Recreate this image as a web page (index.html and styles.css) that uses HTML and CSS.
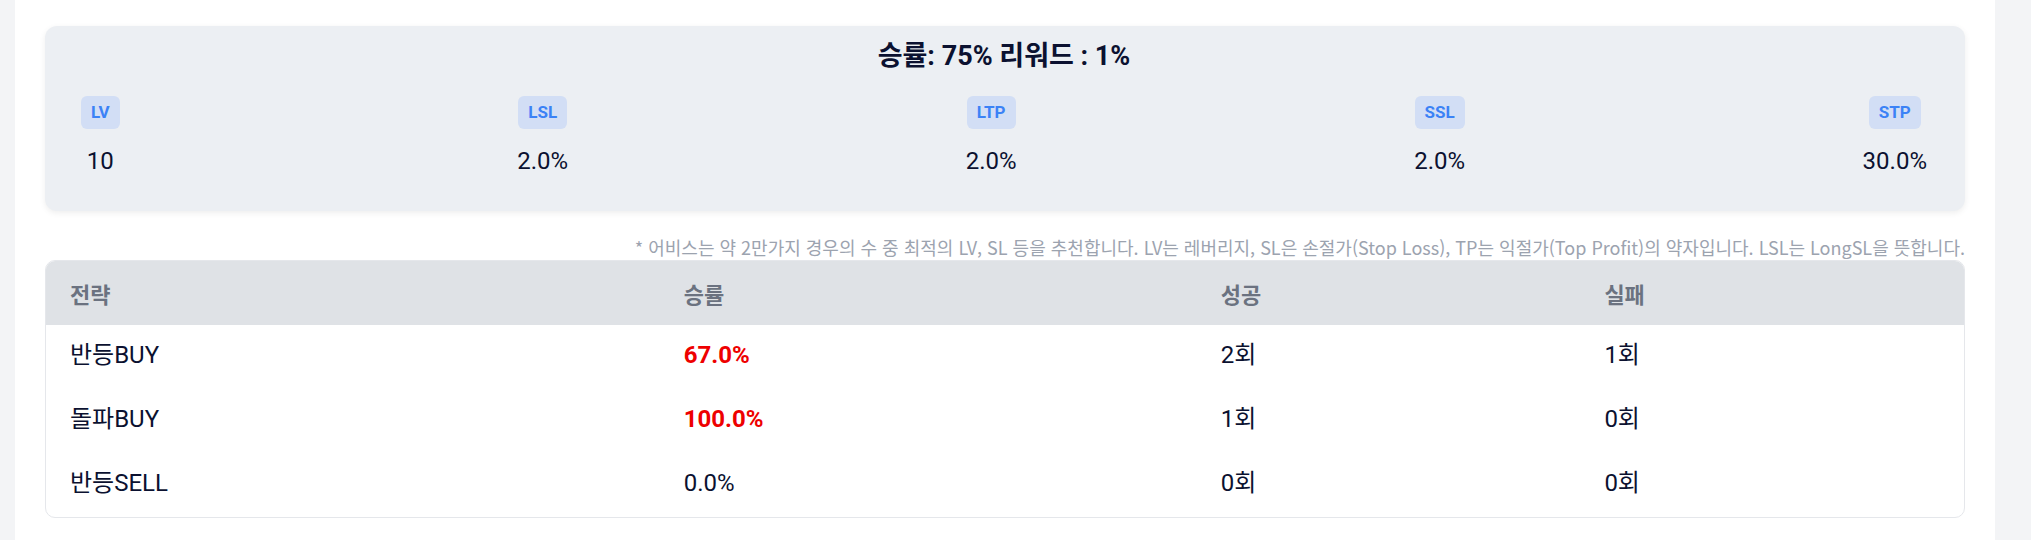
FILE: index.html
```html
<!DOCTYPE html>
<html lang="ko">
<head>
    <meta charset="UTF-8">
    <title>전략 추천 결과</title>
    <link rel="stylesheet" href="styles.css">
</head>
<body>
    <div class="panel">
        <div class="summary">
            <h2 class="summary-title">승률: 75% 리워드 : 1%</h2>
            <div class="stats">
                <div class="stat"><span class="badge">LV</span><span class="stat-value">10</span></div>
                <div class="stat"><span class="badge">LSL</span><span class="stat-value">2.0%</span></div>
                <div class="stat"><span class="badge">LTP</span><span class="stat-value">2.0%</span></div>
                <div class="stat"><span class="badge">SSL</span><span class="stat-value">2.0%</span></div>
                <div class="stat"><span class="badge">STP</span><span class="stat-value">30.0%</span></div>
            </div>
        </div>

        <p class="note">* 어비스는 약 2만가지 경우의 수 중 최적의 LV, SL 등을 추천합니다. LV는 레버리지, SL은 손절가(Stop Loss), TP는 익절가(Top Profit)의 약자입니다. LSL는 LongSL을 뜻합니다.</p>

        <div class="table-wrap">
            <table class="result-table">
                <colgroup>
                    <col class="col-name">
                    <col class="col-rate">
                    <col class="col-count">
                    <col class="col-count">
                </colgroup>
                <thead>
                    <tr><th>전략</th><th>승률</th><th>성공</th><th>실패</th></tr>
                </thead>
                <tbody>
                    <tr><td>반등BUY</td><td class="hot">67.0%</td><td>2회</td><td>1회</td></tr>
                    <tr><td>돌파BUY</td><td class="hot">100.0%</td><td>1회</td><td>0회</td></tr>
                    <tr><td>반등SELL</td><td>0.0%</td><td>0회</td><td>0회</td></tr>
                </tbody>
            </table>
        </div>
    </div>
</body>
</html>
```

FILE: styles.css
```css
body { margin: 0; background: #f3f4f6; font-family: Roboto, "Noto Sans CJK KR", sans-serif; color: #0b1130; }
.panel { margin-left: 15px; width: 1920px; min-height: 540px; padding: 26px 30px 0; background: #fff; }

.summary { background: #eceff3; border-radius: 12px; padding: 12px 38px 34px 36px; box-shadow: 0 2px 6px rgba(0, 0, 0, 0.07); }
.summary-title { margin: 0 0 22px; text-align: center; font-size: 27px; line-height: 36px; font-weight: 700; }
.stats { display: flex; justify-content: space-between; }
.stat { display: flex; flex-direction: column; align-items: center; gap: 16px; }
.badge { padding: 4px 10px; border-radius: 6px; background: #d2def5; color: #3b82f6; font-size: 17px; line-height: 25px; font-weight: 700; }
.stat-value { font-size: 24px; line-height: 32px; }

.note { margin: 24px 0 0; text-align: right; font-family: "Noto Sans CJK KR", sans-serif; font-size: 18px; line-height: 25px; color: #9ca3af; }

.table-wrap { border: 1px solid #e5e7eb; border-radius: 10px; overflow: hidden; }
.result-table { width: 100%; border-collapse: collapse; table-layout: fixed; }
.col-name { width: 32%; }
.col-rate { width: 28%; }
.col-count { width: 20%; }
.result-table th, .result-table td { padding: 0 24px; text-align: left; }
.result-table th { height: 64px; background: #dfe2e6; color: #6b7280; font-size: 22px; font-weight: 700; }
.result-table td { height: 60px; padding-bottom: 4px; font-size: 24px; line-height: 30px; }
.result-table td.hot { color: #ee0000; font-weight: 700; }
```
